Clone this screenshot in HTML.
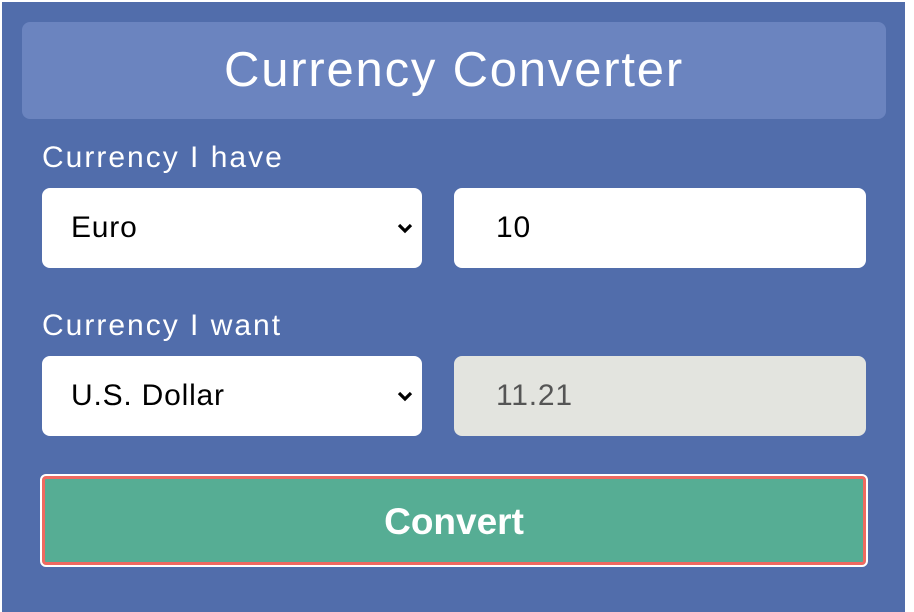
<!DOCTYPE html>
<html><head><style>
body{margin:0;width:914px;height:606px;background:#fff;position:relative;overflow:hidden;font-family:"Liberation Sans",Arial,sans-serif}
.bg{position:absolute;left:2px;top:2px;width:903px;height:610px;background:#516dab}
.hd{position:absolute;left:22px;top:22px;width:864px;height:97px;background:#6b84bf;border-radius:8px;color:#fff;font-size:49px;text-align:center;line-height:97px;letter-spacing:1.8px}
.lb{position:absolute;left:42px;color:#fff;font-size:30px;letter-spacing:2px}
.box{position:absolute;height:80px;border-radius:8px;background:#fff;font-size:30px;line-height:80px;color:#000;letter-spacing:0.8px}
.chev{position:absolute;right:8px;top:33px}
.btn{position:absolute;left:40px;top:474px;width:824px;height:89px;border:2px solid #fff;border-radius:6px;background:#56ad94;box-shadow:inset 0 0 0 3px #ef6a60;color:#fff;font-weight:bold;font-size:37px;text-align:center;line-height:92px}
</style></head><body>
<div class="bg"></div>
<div class="hd">Currency Converter</div>
<div class="lb" style="top:141px">Currency I have</div>
<div class="box" style="left:42px;top:188px;width:380px"><span style="padding-left:29px">Euro</span><svg class="chev" width="18" height="14" viewBox="0 0 18 14"><path d="M3 4 L9 10 L15 4" stroke="#000" stroke-width="3.2" fill="none"/></svg></div>
<div class="box" style="left:454px;top:188px;width:412px"><span style="padding-left:42px">10</span></div>
<div class="lb" style="top:309px">Currency I want</div>
<div class="box" style="left:42px;top:356px;width:380px"><span style="padding-left:29px">U.S. Dollar</span><svg class="chev" width="18" height="14" viewBox="0 0 18 14"><path d="M3 4 L9 10 L15 4" stroke="#000" stroke-width="3.2" fill="none"/></svg></div>
<div class="box" style="left:454px;top:356px;width:412px;background:#e3e4df;color:#555"><span style="padding-left:42px">11.21</span></div>
<div class="btn">Convert</div>
</body></html>
